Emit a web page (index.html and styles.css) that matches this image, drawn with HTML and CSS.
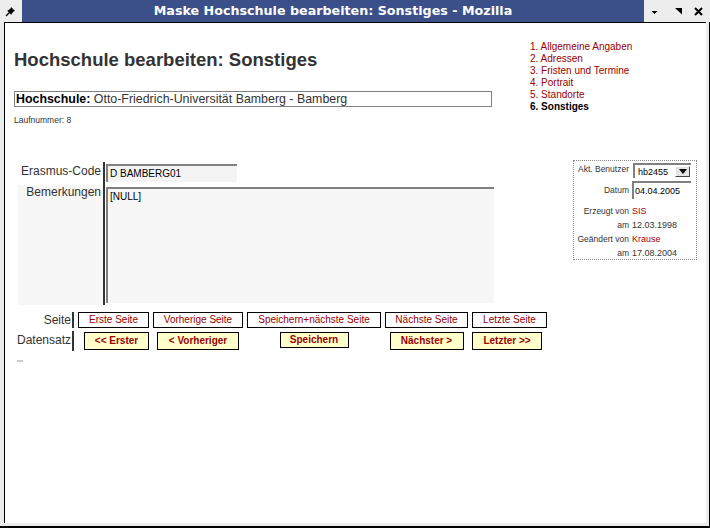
FILE: index.html
```html
<!DOCTYPE html>
<html lang="de">
<head>
<meta charset="utf-8">
<title>Maske Hochschule bearbeiten: Sonstiges - Mozilla</title>
<link rel="stylesheet" href="styles.css">
</head>
<body>
<div class="window">
  <div class="titlebar">
    <div class="tb-menu">
      <svg width="22" height="22" viewBox="0 0 22 22">
        <path d="M11 7 L15 11 L13.5 11.5 L11.5 14 L11.5 15 L7 10.5 L8 10.5 L10.5 8.5 Z" fill="#000"/>
        <path d="M9.2 12.8 L6 16" stroke="#000" stroke-width="1.3" fill="none"/>
      </svg>
    </div>
    <div class="tb-title">Maske Hochschule bearbeiten: Sonstiges - Mozilla</div>
    <div class="tb-buttons">
      <svg class="tb-min" width="7" height="22" viewBox="0 0 7 22"><polygon points="0.5,11 6.5,11 3.5,14" fill="#000"/></svg>
      <svg class="tb-max" width="8" height="22" viewBox="0 0 8 22"><polygon points="1,8 8,8 8,14.5" fill="#000"/></svg>
      <svg class="tb-close" width="9" height="22" viewBox="0 0 9 22"><path d="M1 8 L8 15 M8 8 L1 15" stroke="#000" stroke-width="2" fill="none"/></svg>
    </div>
  </div>
  <div class="frame">
    <div class="content">
      <div class="top">
        <div class="main">
          <h1 class="page-title">Hochschule bearbeiten: Sonstiges</h1>
          <div class="hs-box"><b>Hochschule:</b> Otto-Friedrich-Universität Bamberg - Bamberg</div>
          <div class="lfd">Laufnummer: 8</div>
        </div>
        <ul class="nav">
          <li>1. Allgemeine Angaben</li>
          <li>2. Adressen</li>
          <li>3. Fristen und Termine</li>
          <li>4. Portrait</li>
          <li>5. Standorte</li>
          <li class="current">6. Sonstiges</li>
        </ul>
      </div>
      <div class="mid">
        <div class="form-grid">
          <div class="flabel first">Erasmus-Code</div>
          <div class="fcell"><div class="inp">D BAMBERG01</div></div>
          <div class="flabel alt">Bemerkungen</div>
          <div class="fcell last"><div class="ta">[NULL]</div></div>
        </div>
        <div class="info">
          <div class="ilabel r1">Akt. Benutzer</div>
          <div class="ival"><div class="sel"><span>hb2455</span><span class="sel-btn"><svg width="8" height="5" viewBox="0 0 8 5"><polygon points="0,0 8,0 4,5" fill="#000"/></svg></span></div></div>
          <div class="ilabel r2">Datum</div>
          <div class="ival"><div class="dinp">04.04.2005</div></div>
          <div class="ilabel">Erzeugt von</div>
          <div class="ival red">SIS</div>
          <div class="ilabel">am</div>
          <div class="ival">12.03.1998</div>
          <div class="ilabel">Geändert von</div>
          <div class="ival red">Krause</div>
          <div class="ilabel">am</div>
          <div class="ival">17.08.2004</div>
        </div>
      </div>
      <div class="btn-grid">
        <div class="blabel">Seite</div>
        <button class="pbtn">Erste Seite</button>
        <button class="pbtn">Vorherige Seite</button>
        <button class="pbtn">Speichern+nächste Seite</button>
        <button class="pbtn">Nächste Seite</button>
        <button class="pbtn">Letzte Seite</button>
        <div class="blabel b2">Datensatz</div>
        <button class="dbtn d-first">&lt;&lt; Erster</button>
        <button class="dbtn d-prev">&lt; Vorheriger</button>
        <button class="dbtn d-save">Speichern</button>
        <button class="dbtn d-next">Nächster &gt;</button>
        <button class="dbtn d-last">Letzter &gt;&gt;</button>
      </div>
      <div class="dash"></div>
    </div>
  </div>
</div>
</body>
</html>
```
FILE: styles.css
```css
body {
  margin: 0;
  font-family: "Liberation Sans", Arial, sans-serif;
}
.window {
  width: 710px;
  height: 528px;
  display: flex;
  flex-direction: column;
  background: #ececec;
  overflow: hidden;
}
.titlebar {
  height: 22px;
  display: flex;
  flex: none;
}
.tb-menu {
  width: 22px;
  background: #ededed;
}
.tb-menu svg { display: block; }
.tb-title {
  flex: 1;
  background: #3b4f88;
  color: #fff;
  font: bold 12.7px/22px "DejaVu Sans", sans-serif;
  text-align: center;
  white-space: nowrap;
}
.tb-buttons {
  width: 66px;
  background: #ededed;
  display: flex;
}
.tb-buttons svg { display: block; }
.tb-min { margin-left: 7px; }
.tb-max { margin-left: 16px; }
.tb-close { margin-left: 12px; }

.frame {
  flex: 1;
  display: flex;
  min-height: 0;
  padding: 0 3px 3px 4px;
  border-bottom: 2px solid #000;
  border-right: 1px solid #000;
}
.content {
  flex: 1;
  background: #fff;
  border-left: 1px solid #000;
  border-top: 1px solid #000;
}

.top {
  display: flex;
  padding: 18px 0 0 9px;
}
.main {
  width: 480px;
  padding-top: 8px;
}
.page-title {
  margin: 0;
  font: bold 18.5px/21px "Liberation Sans", Arial, sans-serif;
  color: #333;
  white-space: nowrap;
}
.hs-box {
  margin-top: 21px;
  box-sizing: border-box;
  width: 478px;
  height: 16px;
  border: 1px solid #808080;
  padding-left: 1px;
  font-size: 12.4px;
  line-height: 14px;
  color: #333;
  white-space: nowrap;
}
.hs-box b { color: #000; }
.lfd {
  margin-top: 7px;
  font-size: 8.5px;
  line-height: 12px;
  color: #333;
}
.nav {
  list-style: none;
  margin: 0 0 0 36px;
  padding: 0;
  font-size: 10px;
  line-height: 12px;
  color: #990000;
  white-space: nowrap;
}
.nav .current {
  color: #000;
  font-weight: bold;
}

.mid {
  display: flex;
  align-items: flex-start;
  margin-top: 34px;
  padding-left: 13px;
}
.form-grid {
  display: grid;
  grid-template-columns: 87px 389px;
  margin-top: 2px;
}
.flabel {
  box-sizing: border-box;
  border-right: 2px solid #333;
  text-align: right;
  padding-right: 2px;
  font-size: 12px;
  line-height: 14px;
  color: #333;
  white-space: nowrap;
}
.flabel.first { padding-top: 2px; }
.flabel.alt { background: #f7f7f7; }
.fcell { padding: 2px 0 3px 1px; }
.fcell.last { padding-bottom: 2px; }
.inp {
  box-sizing: border-box;
  width: 131px;
  height: 18px;
  border-top: 2px solid #808080;
  border-left: 2px solid #808080;
  background: #f4f4f4;
  padding-left: 2px;
  font-size: 10px;
  line-height: 16px;
  color: #000;
}
.ta {
  box-sizing: border-box;
  width: 388px;
  height: 116px;
  border-top: 2px solid #808080;
  border-left: 2px solid #808080;
  background: #f7f7f7;
  padding: 2px 0 0 2px;
  font-size: 10px;
  line-height: 12px;
  color: #000;
}

.info {
  box-sizing: border-box;
  width: 124px;
  height: 100px;
  margin-left: 79px;
  border: 1px dotted #888;
  padding: 1px 2px 0 0;
  display: grid;
  grid-template-columns: 55px 62px;
  column-gap: 3px;
  grid-template-rows: 18px 24px 14px 14px 14px 14px;
  color: #333;
}
.ilabel {
  text-align: right;
  font-size: 8.5px;
  line-height: 14px;
  white-space: nowrap;
}
.ilabel.r1 { padding-top: 1px; line-height: 12px; }
.ilabel.r2 { padding-top: 4px; line-height: 12px; }
.ival {
  font-size: 9px;
  line-height: 14px;
  white-space: nowrap;
}
.ival.red { color: #aa0000; }
.sel {
  box-sizing: border-box;
  margin: 1px 0 0 1px;
  width: 58px;
  height: 15px;
  border-top: 2px solid #808080;
  border-left: 2px solid #808080;
  background: #fff;
  display: flex;
  align-items: center;
  justify-content: space-between;
  padding: 0 1px 0 3px;
  color: #000;
}
.sel-btn {
  box-sizing: border-box;
  width: 15px;
  height: 11px;
  border: 1px solid;
  border-color: #fff #444 #444 #fff;
  background: #e4e4e4;
  display: flex;
  align-items: center;
  justify-content: center;
}
.sel-btn svg { display: block; }
.dinp {
  box-sizing: border-box;
  margin-top: 1px;
  width: 59px;
  height: 18px;
  border-top: 2px solid #808080;
  border-left: 2px solid #808080;
  background: #fff;
  padding: 1px 0 0 1px;
  font-size: 9px;
  line-height: 14px;
  color: #000;
}

.btn-grid {
  display: grid;
  grid-template-columns: 60px 71px 90px 134px 83px 75px;
  grid-template-rows: 16px 20px;
  column-gap: 4px;
  row-gap: 3px;
  margin: 7px 0 0 9px;
}
.blabel {
  box-sizing: border-box;
  border-right: 2px solid #333;
  text-align: right;
  padding-right: 1px;
  font-size: 12px;
  line-height: 16px;
  color: #333;
}
.blabel.b2 { line-height: 18px; }
.pbtn, .dbtn {
  font-family: "Liberation Sans", Arial, sans-serif;
  margin: 0;
  padding: 0;
  box-sizing: border-box;
  border: 1px solid #000;
  color: #990000;
  font-size: 10px;
  text-align: center;
  white-space: nowrap;
}
.pbtn {
  height: 16px;
  background: #fff;
  line-height: 14px;
}
.dbtn {
  height: 18px;
  margin-top: 1px;
  background: #ffffcc;
  font-weight: bold;
  line-height: 16px;
  justify-self: center;
  align-self: start;
}
.d-first { width: 65px; justify-self: end; }
.d-prev { width: 82px; }
.d-save { width: 69px; height: 16px; line-height: 14px; }
.d-next { width: 74px; }
.d-last { width: 70px; justify-self: start; }

.dash {
  width: 6px;
  height: 2px;
  background: #ccc;
  margin: 9px 0 0 12px;
}
```
